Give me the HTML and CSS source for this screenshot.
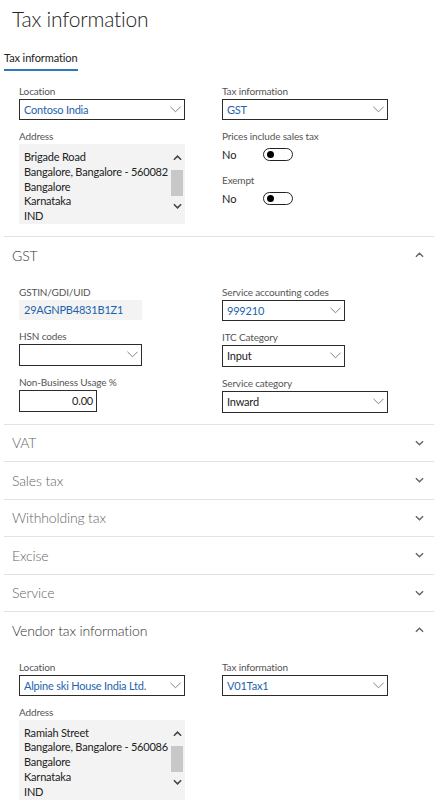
FILE: index.html
```html
<!DOCTYPE html>
<html lang="en">
<head>
<meta charset="utf-8">
<title>Tax information</title>
<link rel="stylesheet" href="styles.css">
</head>
<body>
<div class="page">
  <h1 class="title">Tax information</h1>
  <div class="tabs"><span class="tab">Tax information</span></div>

  <div class="form top-form">
    <div class="col">
      <div class="field">
        <div class="label">Location</div>
        <div class="select w166"><span class="value link">Contoso India</span><svg class="dd" viewBox="0 0 12 7"><path d="M0.5 0.5 L6 6 L11.5 0.5"/></svg></div>
      </div>
      <div class="field">
        <div class="label">Address</div>
        <div class="address">
          <div class="addr-text">Brigade Road<br>Bangalore, Bangalore - 560082<br>Bangalore<br>Karnataka<br>IND</div>
          <div class="scroll">
            <svg class="sarrow" viewBox="0 0 10 6"><path d="M1 5 L5 1 L9 5"/></svg>
            <div class="thumb"></div>
            <svg class="sarrow" viewBox="0 0 10 6"><path d="M1 1 L5 5 L9 1"/></svg>
          </div>
        </div>
      </div>
    </div>
    <div class="col">
      <div class="field">
        <div class="label">Tax information</div>
        <div class="select w166"><span class="value link">GST</span><svg class="dd" viewBox="0 0 12 7"><path d="M0.5 0.5 L6 6 L11.5 0.5"/></svg></div>
      </div>
      <div class="field">
        <div class="label">Prices include sales tax</div>
        <div class="toggle-row"><span class="toggle-text">No</span><span class="toggle"><span class="knob"></span></span></div>
      </div>
      <div class="field">
        <div class="label">Exempt</div>
        <div class="toggle-row"><span class="toggle-text">No</span><span class="toggle"><span class="knob"></span></span></div>
      </div>
    </div>
  </div>

  <section class="section open">
    <div class="sec-head"><span class="sec-title">GST</span><svg class="chev" viewBox="0 0 10 6"><path d="M1 5 L5 1 L9 5"/></svg></div>
    <div class="form sec-body">
      <div class="col">
        <div class="field">
          <div class="label">GSTIN/GDI/UID</div>
          <div class="readonly w123"><span class="value link">29AGNPB4831B1Z1</span></div>
        </div>
        <div class="field">
          <div class="label">HSN codes</div>
          <div class="select w123 h22"><span class="value"></span><svg class="dd" viewBox="0 0 12 7"><path d="M0.5 0.5 L6 6 L11.5 0.5"/></svg></div>
        </div>
        <div class="field">
          <div class="label">Non-Business Usage %</div>
          <div class="input w78 h22"><span class="value">0.00</span></div>
        </div>
      </div>
      <div class="col">
        <div class="field">
          <div class="label">Service accounting codes</div>
          <div class="select w123"><span class="value link">999210</span><svg class="dd" viewBox="0 0 12 7"><path d="M0.5 0.5 L6 6 L11.5 0.5"/></svg></div>
        </div>
        <div class="field">
          <div class="label">ITC Category</div>
          <div class="select w123 h22"><span class="value">Input</span><svg class="dd" viewBox="0 0 12 7"><path d="M0.5 0.5 L6 6 L11.5 0.5"/></svg></div>
        </div>
        <div class="field">
          <div class="label">Service category</div>
          <div class="select w166 h22"><span class="value">Inward</span><svg class="dd" viewBox="0 0 12 7"><path d="M0.5 0.5 L6 6 L11.5 0.5"/></svg></div>
        </div>
      </div>
    </div>
  </section>

  <section class="section"><div class="sec-head"><span class="sec-title">VAT</span><svg class="chev" viewBox="0 0 10 6"><path d="M1 1 L5 5 L9 1"/></svg></div></section>
  <section class="section"><div class="sec-head"><span class="sec-title">Sales tax</span><svg class="chev" viewBox="0 0 10 6"><path d="M1 1 L5 5 L9 1"/></svg></div></section>
  <section class="section"><div class="sec-head"><span class="sec-title">Withholding tax</span><svg class="chev" viewBox="0 0 10 6"><path d="M1 1 L5 5 L9 1"/></svg></div></section>
  <section class="section"><div class="sec-head"><span class="sec-title">Excise</span><svg class="chev" viewBox="0 0 10 6"><path d="M1 1 L5 5 L9 1"/></svg></div></section>
  <section class="section"><div class="sec-head"><span class="sec-title">Service</span><svg class="chev" viewBox="0 0 10 6"><path d="M1 1 L5 5 L9 1"/></svg></div></section>

  <section class="section open">
    <div class="sec-head"><span class="sec-title">Vendor tax information</span><svg class="chev" viewBox="0 0 10 6"><path d="M1 5 L5 1 L9 5"/></svg></div>
    <div class="form sec-body">
      <div class="col">
        <div class="field">
          <div class="label">Location</div>
          <div class="select w166"><span class="value link">Alpine ski House India Ltd.</span><svg class="dd" viewBox="0 0 12 7"><path d="M0.5 0.5 L6 6 L11.5 0.5"/></svg></div>
        </div>
        <div class="field">
          <div class="label">Address</div>
          <div class="address">
            <div class="addr-text">Ramiah Street<br>Bangalore, Bangalore - 560086<br>Bangalore<br>Karnataka<br>IND</div>
            <div class="scroll">
              <svg class="sarrow" viewBox="0 0 10 6"><path d="M1 5 L5 1 L9 5"/></svg>
              <div class="thumb"></div>
              <svg class="sarrow" viewBox="0 0 10 6"><path d="M1 1 L5 5 L9 1"/></svg>
            </div>
          </div>
        </div>
      </div>
      <div class="col">
        <div class="field">
          <div class="label">Tax information</div>
          <div class="select w166"><span class="value link">V01Tax1</span><svg class="dd" viewBox="0 0 12 7"><path d="M0.5 0.5 L6 6 L11.5 0.5"/></svg></div>
        </div>
      </div>
    </div>
  </section>
</div>
</body>
</html>
```

FILE: styles.css
```css
* { box-sizing: border-box; }
html, body { margin: 0; padding: 0; background: #fff; }
body {
  font-family: Lato, "Open Sans", "Liberation Sans", sans-serif;
  color: #222;
  font-size: 11px;
}
.page { padding: 0 1px 0 4px; width: 435px; overflow: hidden; }
.title {
  margin: 0;
  padding: 5px 0 0 8px;
  font-weight: 300;
  font-size: 21px;
  letter-spacing: -0.2px;
  line-height: 28px;
  color: #222;
}
.tabs { margin-top: 17px; height: 23px; }
.tab {
  display: inline-block;
  white-space: nowrap;
  font-size: 11px;
  letter-spacing: -0.1px;
  line-height: 16px;
  padding-bottom: 3px;
  border-bottom: 2px solid #2f78bd;
  color: #222;
}
.form {
  display: grid;
  grid-template-columns: 203px 1fr;
  padding-left: 15px;
}
.top-form { padding-top: 11px; padding-bottom: 12px; }
.col { display: flex; flex-direction: column; gap: 9px; }
.field { display: flex; flex-direction: column; }
.label {
  font-size: 10px;
  letter-spacing: -0.15px;
  line-height: 14px;
  color: #555;
  margin-bottom: 1px;
  white-space: nowrap;
}
.select, .readonly, .input {
  display: flex;
  align-items: center;
  height: 21px;
  border: 1px solid #2b2b2b;
  padding: 0 0 0 4px;
  font-size: 11px;
  letter-spacing: -0.2px;
  color: #222;
}
.readonly { border-color: #f3f3f3; background: #f3f3f3; height: 20px; }
.input { justify-content: flex-end; padding: 0 3px 0 0; }
.h22 { height: 22px; }
.w166 { width: 166px; }
.w123 { width: 123px; }
.w78 { width: 78px; }
.value { white-space: nowrap; flex: 1; }
.input .value { flex: 0 0 auto; }
.link { color: #1c63ae; }
.dd {
  width: 11px; height: 7px;
  margin-right: 3px;
  fill: none; stroke: #777; stroke-width: 1;
  flex: 0 0 auto;
}
.address {
  display: flex;
  width: 166px;
  height: 80px;
  background: #f3f3f3;
  overflow: hidden;
}
.addr-text {
  flex: 1;
  padding: 6px 0 0 5px;
  line-height: 14.8px;
  font-size: 11px;
  letter-spacing: -0.2px;
  color: #222;
  white-space: nowrap;
}
.scroll {
  width: 12px;
  margin-right: 2px;
  display: flex;
  flex-direction: column;
  align-items: center;
  padding-top: 11px;
}
.sarrow { width: 9px; height: 6px; fill: none; stroke: #444; stroke-width: 1.7; }
.thumb { width: 12px; height: 26px; background: #c8c8c8; margin: 9px 0 7px; }
.toggle-row { display: flex; align-items: center; height: 20px; }
.toggle-text { width: 41px; font-size: 11px; color: #222; }
.toggle {
  display: flex; align-items: center;
  width: 30px; height: 13px;
  border: 1.5px solid #222;
  border-radius: 7px;
  padding-left: 3px;
}
.knob { width: 7px; height: 7px; border-radius: 50%; background: #000; }
.section { border-top: 1px solid #e3e3e3; }
.sec-head {
  display: flex;
  align-items: center;
  justify-content: space-between;
  height: 36.5px;
  padding: 0 10px 0 8px;
}
.sec-title { font-size: 14px; letter-spacing: -0.15px; font-weight: 300; color: #666; }
.open .sec-title { color: #333; }
.chev { width: 9px; height: 6px; fill: none; stroke: #666; stroke-width: 1.6; }
.sec-body { padding-top: 11px; padding-bottom: 11px; }
```
